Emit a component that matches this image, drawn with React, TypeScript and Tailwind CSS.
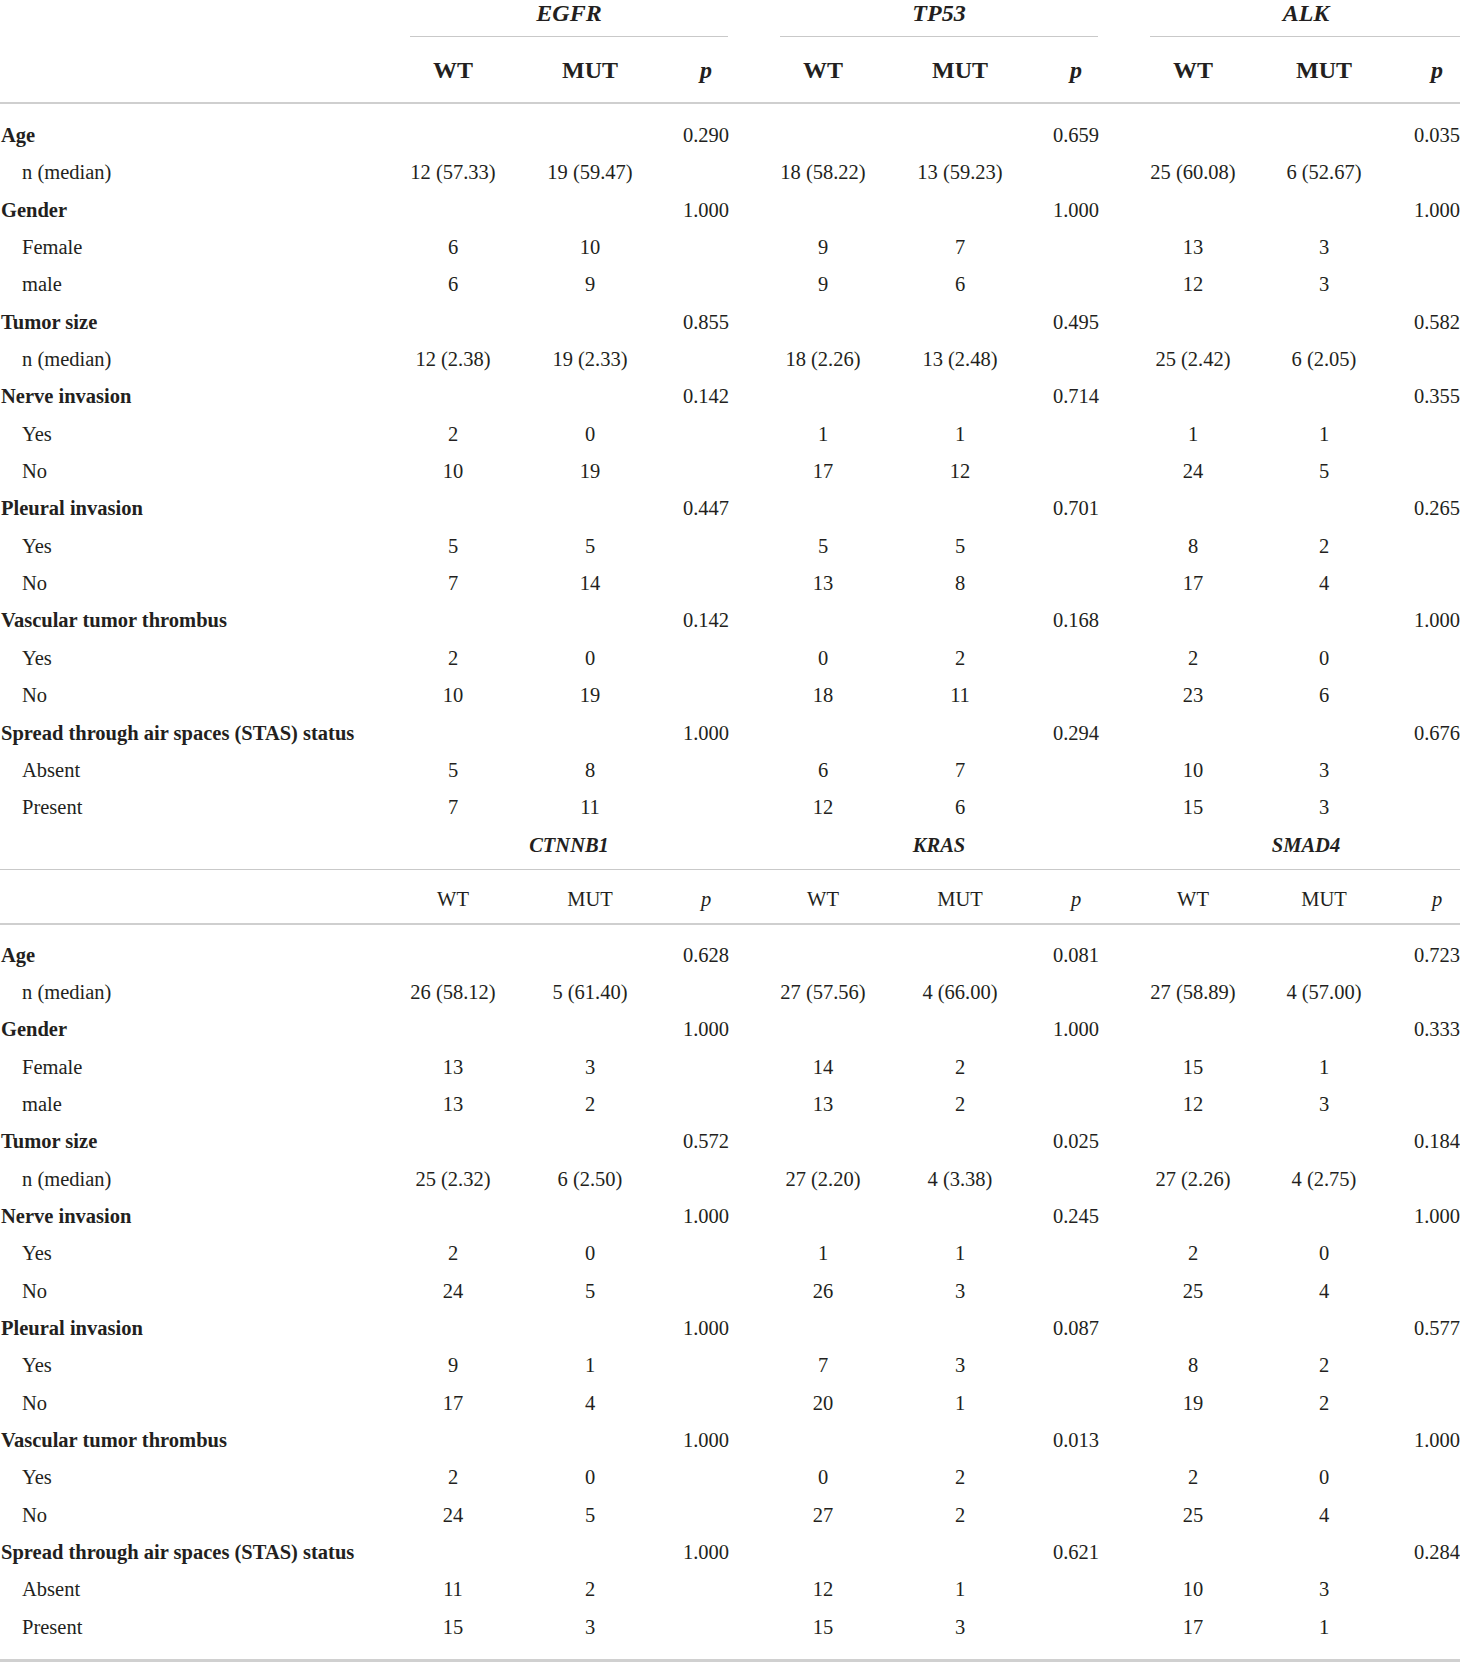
type Row = { label: string; head?: boolean; cells: string[] };

const cols =
  "grid grid-cols-[384px_138px_136px_96px_138px_136px_96px_138px_124px_102px]";

function head(label: string, p: string[]): Row {
  return { label, head: true, cells: ["", "", p[0], "", "", p[1], "", "", p[2]] };
}

function sub(label: string, v: string[]): Row {
  return {
    label,
    cells: [v[0], v[1], "", v[2], v[3], "", v[4], v[5], ""],
  };
}

const topRows: Row[] = [
  head("Age", ["0.290", "0.659", "0.035"]),
  sub("n (median)", ["12 (57.33)", "19 (59.47)", "18 (58.22)", "13 (59.23)", "25 (60.08)", "6 (52.67)"]),
  head("Gender", ["1.000", "1.000", "1.000"]),
  sub("Female", ["6", "10", "9", "7", "13", "3"]),
  sub("male", ["6", "9", "9", "6", "12", "3"]),
  head("Tumor size", ["0.855", "0.495", "0.582"]),
  sub("n (median)", ["12 (2.38)", "19 (2.33)", "18 (2.26)", "13 (2.48)", "25 (2.42)", "6 (2.05)"]),
  head("Nerve invasion", ["0.142", "0.714", "0.355"]),
  sub("Yes", ["2", "0", "1", "1", "1", "1"]),
  sub("No", ["10", "19", "17", "12", "24", "5"]),
  head("Pleural invasion", ["0.447", "0.701", "0.265"]),
  sub("Yes", ["5", "5", "5", "5", "8", "2"]),
  sub("No", ["7", "14", "13", "8", "17", "4"]),
  head("Vascular tumor thrombus", ["0.142", "0.168", "1.000"]),
  sub("Yes", ["2", "0", "0", "2", "2", "0"]),
  sub("No", ["10", "19", "18", "11", "23", "6"]),
  head("Spread through air spaces (STAS) status", ["1.000", "0.294", "0.676"]),
  sub("Absent", ["5", "8", "6", "7", "10", "3"]),
  sub("Present", ["7", "11", "12", "6", "15", "3"]),
];

const bottomRows: Row[] = [
  head("Age", ["0.628", "0.081", "0.723"]),
  sub("n (median)", ["26 (58.12)", "5 (61.40)", "27 (57.56)", "4 (66.00)", "27 (58.89)", "4 (57.00)"]),
  head("Gender", ["1.000", "1.000", "0.333"]),
  sub("Female", ["13", "3", "14", "2", "15", "1"]),
  sub("male", ["13", "2", "13", "2", "12", "3"]),
  head("Tumor size", ["0.572", "0.025", "0.184"]),
  sub("n (median)", ["25 (2.32)", "6 (2.50)", "27 (2.20)", "4 (3.38)", "27 (2.26)", "4 (2.75)"]),
  head("Nerve invasion", ["1.000", "0.245", "1.000"]),
  sub("Yes", ["2", "0", "1", "1", "2", "0"]),
  sub("No", ["24", "5", "26", "3", "25", "4"]),
  head("Pleural invasion", ["1.000", "0.087", "0.577"]),
  sub("Yes", ["9", "1", "7", "3", "8", "2"]),
  sub("No", ["17", "4", "20", "1", "19", "2"]),
  head("Vascular tumor thrombus", ["1.000", "0.013", "1.000"]),
  sub("Yes", ["2", "0", "0", "2", "2", "0"]),
  sub("No", ["24", "5", "27", "2", "25", "4"]),
  head("Spread through air spaces (STAS) status", ["1.000", "0.621", "0.284"]),
  sub("Absent", ["11", "2", "12", "1", "10", "3"]),
  sub("Present", ["15", "3", "15", "3", "17", "1"]),
];

function Body({ rows }: { rows: Row[] }) {
  return (
    <div>
      {rows.map((r, i) => (
        <div key={i} className={`${cols} h-[37.35px] leading-[37.35px]`}>
          <div className={r.head ? "pl-[1px] font-bold whitespace-nowrap" : "pl-[22px]"}>
            {r.label}
          </div>
          {r.cells.map((c, j) => (
            <div key={j} className="text-center whitespace-nowrap">
              {c}
            </div>
          ))}
        </div>
      ))}
    </div>
  );
}

function SubHeader({ bold }: { bold: boolean }) {
  const w = bold ? "font-bold text-[24px]" : "";
  return (
    <>
      {[0, 1, 2].map((g) => (
        <div key={g} className="contents">
          <div className={`text-center ${w}`}>WT</div>
          <div className={`text-center ${w}`}>MUT</div>
          <div className={`text-center italic ${w}`}>p</div>
        </div>
      ))}
    </>
  );
}

export default function App() {
  return (
    <div className="w-[1460px] h-[1663px] overflow-hidden bg-white text-[#231f20] text-[20.5px] font-['Liberation_Serif',serif]">
      <div className="w-[1500px]">
        {/* first block */}
        <div className={`${cols} h-[37px]`}>
          <div />
          {["EGFR", "TP53", "ALK"].map((g) => (
            <div key={g} className="col-span-3 px-[26px]">
              <div className="h-full border-b border-[#c9c9c9] text-center text-[24px] font-bold italic leading-[26px]">
                {g}
              </div>
            </div>
          ))}
        </div>
        <div className={`${cols} h-[67px] items-center border-b-2 border-[#cfcfcf]`}>
          <div />
          <SubHeader bold />
        </div>
        <div className="pt-[13px]">
          <Body rows={topRows} />
        </div>

        {/* second block */}
        <div className={`${cols} h-[43px] border-b border-[#c9c9c9]`}>
          <div />
          {["CTNNB1", "KRAS", "SMAD4"].map((g) => (
            <div key={g} className="col-span-3 pt-[6px] text-center font-bold italic leading-[24px]">
              {g}
            </div>
          ))}
        </div>
        <div className={`${cols} h-[55px] pt-[6px] items-center border-b-2 border-[#cfcfcf]`}>
          <div />
          <SubHeader bold={false} />
        </div>
        <div className="pt-[12px] pb-[13px] border-b-[3px] border-[#d0d0d0]">
          <Body rows={bottomRows} />
        </div>
      </div>
    </div>
  );
}
